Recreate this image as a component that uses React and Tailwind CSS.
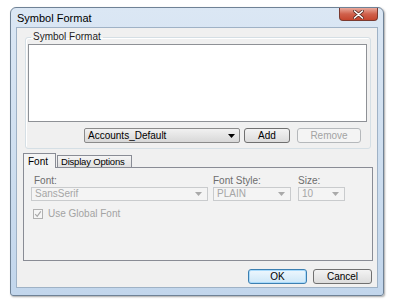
import React from "react";

const font = { fontFamily: '"Liberation Sans", Arial, sans-serif' };

function Arrow({ color = "#000", cls = "" }) {
  return (
    <svg width="7" height="4" viewBox="0 0 7 4" className={cls}>
      <path d="M0 0 L7 0 L3.5 4 Z" fill={color} />
    </svg>
  );
}

function DisabledCombo({ text, w }) {
  return (
    <div className={`flex h-[14px] items-center justify-between border border-[#c9cbcd] bg-[#f4f4f4] pl-[3px] pr-[5px] ${w}`}>
      <span className="text-[10px] leading-none text-[#a6a6a6]">{text}</span>
      <Arrow color="#a9a9a9" />
    </div>
  );
}

export default function App() {
  return (
    <div className="h-[305px] w-[398px] overflow-hidden bg-white pl-[10px] pt-[7px]" style={font}>
      <div className="flex h-[289px] w-[374px] flex-col rounded-t-[6px] rounded-b-[3px] border border-[#6f8296] bg-gradient-to-b from-[#dbe7f4] via-[#cfdff0] to-[#c2d6ec] shadow-[1px_1px_2px_rgba(0,0,0,0.35)]">
        {/* title bar */}
        <div className="flex h-[19px] shrink-0 items-start justify-between">
          <span className="pl-[6px] pt-[4px] text-[11px] leading-[12px] text-black">Symbol Format</span>
          <div className="mr-[5px] flex h-[13px] w-[39px] items-center justify-center rounded-b-[4px] border border-t-0 border-[#7a3a30] bg-gradient-to-b from-[#e9a99c] via-[#d0614c] to-[#c5452d]">
            <svg width="11" height="9" viewBox="0 0 11 9">
              <path d="M1.5 1 L9.5 8 M9.5 1 L1.5 8" stroke="#5a2a22" strokeWidth="3" strokeLinecap="round" />
              <path d="M1.5 1 L9.5 8 M9.5 1 L1.5 8" stroke="#ffffff" strokeWidth="1.6" strokeLinecap="round" />
            </svg>
          </div>
        </div>
        {/* client */}
        <div className="mx-[5px] flex h-[261px] flex-col border border-[#9fb2c6] bg-[#f0f0f0]">
          <fieldset className="ml-[8px] mt-[3px] h-[118px] w-[346px] rounded-[3px] border border-[#d5dfe5] px-[2px] pb-[4px] shadow-[inset_1px_1px_0_#fff]">
            <legend className="ml-[3px] px-[2px] text-[10px] leading-[12px] text-[#1e1e1e]">Symbol Format</legend>
            <div className="mt-[1px] h-[78px] w-[339px] border border-[#8e9196] bg-white"></div>
            <div className="mt-[6px] flex items-center">
              <div className="ml-[56px] flex h-[15px] w-[156px] items-center justify-between rounded-[2px] border border-[#8a8a8a] bg-gradient-to-b from-[#f1f1f1] to-[#d8d8d8] pl-[3px] pr-[4px]">
                <span className="text-[10px] leading-none text-black">Accounts_Default</span>
                <Arrow />
              </div>
              <div className="ml-[4px] flex h-[15px] w-[46px] items-center justify-center rounded-[3px] border border-[#707070] bg-gradient-to-b from-[#f3f3f3] to-[#dcdcdc] text-[10px] leading-none text-black">Add</div>
              <div className="ml-[7px] flex h-[15px] w-[64px] items-center justify-center rounded-[3px] border border-[#b5b8bb] bg-[#f4f4f4] text-[10px] leading-none text-[#a3a3a3]">Remove</div>
            </div>
          </fieldset>
          {/* tabs */}
          <div className="ml-[6px] mt-[4px] flex items-end">
            <div className="relative z-10 -mb-px flex h-[15px] w-[33px] items-start border border-b-0 border-[#898c95] bg-[#f4f4f4] pl-[4px] pt-[2px] text-[10px] leading-[11px] text-black">Font</div>
            <div className="ml-[1px] flex h-[12px] w-[75px] items-center whitespace-nowrap border border-b-0 border-[#898c95] bg-gradient-to-b from-[#f5f5f5] to-[#e1e1e1] pl-[3px] text-[9.5px] leading-none tracking-[-0.2px] text-black">Display Options</div>
          </div>
          <div className="ml-[6px] h-[94px] w-[350px] border border-[#898c95] bg-[#f2f2f2] pl-[7px] pt-[7px]">
            <div className="flex">
              <div className="flex flex-col">
                <span className="pl-[3px] text-[10px] leading-[11px] text-[#6d6d6d]">Font:</span>
                <div className="mt-[1px]"><DisabledCombo text="SansSerif" w="w-[177px]" /></div>
              </div>
              <div className="ml-[5px] flex flex-col">
                <span className="text-[10px] leading-[11px] text-[#6d6d6d]">Font Style:</span>
                <div className="mt-[1px]"><DisabledCombo text="PLAIN" w="w-[78px]" /></div>
              </div>
              <div className="ml-[7px] flex flex-col">
                <span className="text-[10px] leading-[11px] text-[#6d6d6d]">Size:</span>
                <div className="mt-[1px]"><DisabledCombo text="10" w="w-[47px]" /></div>
              </div>
            </div>
            <div className="ml-[2px] mt-[8px] flex items-center">
              <div className="flex h-[10px] w-[10px] items-center justify-center border border-[#b1b1b1] bg-[#f6f6f6]">
                <svg width="8" height="8" viewBox="0 0 8 8">
                  <path d="M1.2 4.2 L3.2 6.3 L6.8 1.3" stroke="#a8a8a8" strokeWidth="1.2" fill="none" />
                </svg>
              </div>
              <span className="ml-[5px] text-[10px] leading-none text-[#a3a3a3]">Use Global Font</span>
            </div>
          </div>
          {/* buttons */}
          <div className="mr-[5px] mt-[8px] flex justify-end gap-[6px]">
            <div className="flex h-[15px] w-[59px] items-center justify-center rounded-[3px] border border-[#3c7fb1] bg-gradient-to-b from-[#eef7fd] to-[#cde7f8] text-[10px] leading-none text-black shadow-[inset_0_0_0_1px_#a8dafb]">OK</div>
            <div className="flex h-[15px] w-[59px] items-center justify-center rounded-[3px] border border-[#707070] bg-gradient-to-b from-[#f3f3f3] to-[#dcdcdc] text-[10px] leading-none text-black">Cancel</div>
          </div>
        </div>
      </div>
    </div>
  );
}
